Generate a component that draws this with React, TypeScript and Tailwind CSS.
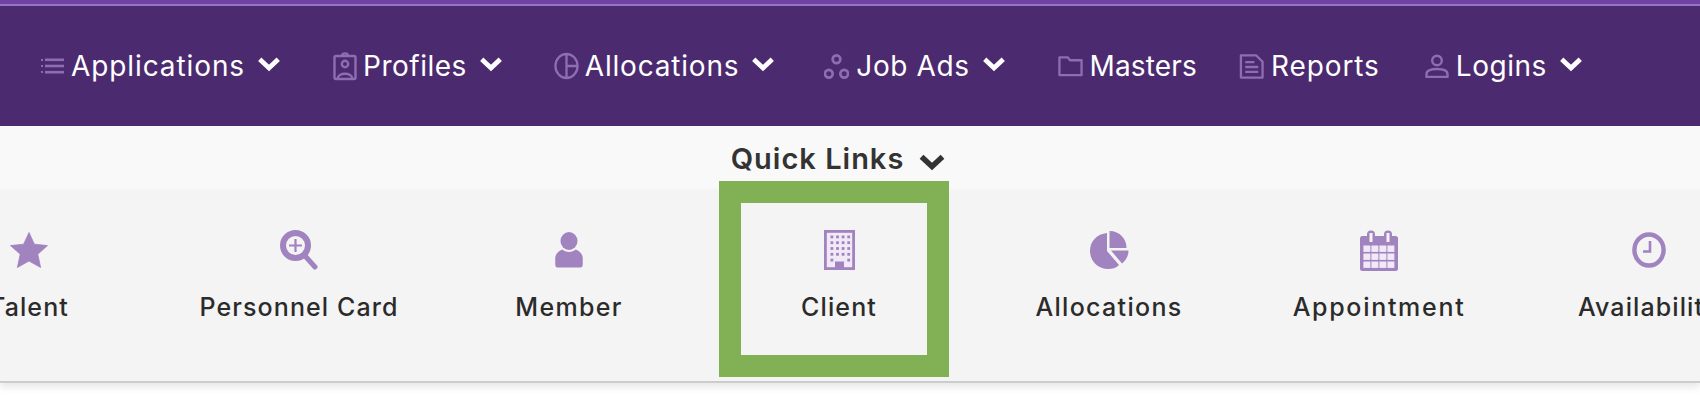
const NAV = "#8e6eb3";
const ACCENT = "#a083bf";

function Chevron({ className }: { className: string }) {
  return (
    <svg viewBox="0 0 22 15" className={className} fill="none" stroke="currentColor" strokeWidth="4.8" strokeLinecap="square">
      <path d="M3.5 4 L11 11 L18.5 4" />
    </svg>
  );
}

function ListIcon() {
  return (
    <svg width="24" height="16" viewBox="0 0 24 16" fill={NAV}>
      <rect x="0" y="1" width="2" height="2" />
      <rect x="0" y="7" width="2" height="2" />
      <rect x="0" y="13" width="2" height="2" />
      <rect x="4" y="0.5" width="19" height="2.6" />
      <rect x="4" y="6.7" width="19" height="2.6" />
      <rect x="4" y="12.9" width="19" height="2.6" />
    </svg>
  );
}

function BadgeIcon() {
  return (
    <svg width="24" height="29" viewBox="0 0 24 29" fill="none" stroke={NAV} strokeWidth="2.4">
      <rect x="1.5" y="4" width="21" height="23" rx="1.5" />
      <path d="M9 4 C9 0.5 15 0.5 15 4" />
      <circle cx="12" cy="12" r="3.2" />
      <path d="M4.5 27 C5 20 19 20 19.5 27" />
    </svg>
  );
}

function HalfPieIcon() {
  return (
    <svg width="26" height="28" viewBox="0 0 26 28" fill="none" stroke={NAV} strokeWidth="2.4">
      <ellipse cx="13" cy="14" rx="11.5" ry="12.5" />
      <path d="M13 1.5 V26.5 M13 14 H24.5" />
    </svg>
  );
}

function DotsIcon() {
  return (
    <svg width="26" height="27" viewBox="0 0 26 27" fill="none" stroke={NAV} strokeWidth="2.8">
      <circle cx="13" cy="6" r="4" />
      <circle cx="5" cy="21" r="4" />
      <circle cx="21" cy="21" r="4" />
    </svg>
  );
}

function FolderIcon() {
  return (
    <svg width="26" height="22" viewBox="0 0 26 22" fill="none" stroke={NAV} strokeWidth="2.4">
      <path d="M1.5 20.5 V2 H10 L12.5 5 H24.5 V20.5 Z" strokeLinejoin="round" />
    </svg>
  );
}

function ReportIcon() {
  return (
    <svg width="26" height="27" viewBox="0 0 26 27" fill="none" stroke={NAV} strokeWidth="2.4">
      <path d="M2 2 H18 L24.5 8.5 V25 H2 Z" strokeLinejoin="round" />
      <path d="M6.5 9 H16 M6.5 14 H20 M6.5 19 H20" />
    </svg>
  );
}

function PersonOutlineIcon() {
  return (
    <svg width="24" height="24" viewBox="0 0 24 24" fill="none" stroke={NAV} strokeWidth="2.4">
      <circle cx="12" cy="6.5" r="4.8" />
      <path d="M1.5 23 V20 C1.5 16 6 15 12 15 C18 15 22.5 16 22.5 20 V23 Z" strokeLinejoin="round" />
    </svg>
  );
}

function StarIcon() {
  return (
    <svg width="38" height="38" viewBox="0 0 38 38" fill={ACCENT}>
      <path d="M19 1.5 L24.4 13.2 L37.5 14.6 L27.8 23.2 L30.6 36.5 L19 30 L7.4 36.5 L10.2 23.2 L0.5 14.6 L13.6 13.2 Z" strokeLinejoin="round" stroke={ACCENT} strokeWidth="0.8" />
    </svg>
  );
}

function ZoomPlusIcon() {
  return (
    <svg width="38" height="40" viewBox="0 0 38 40" fill="none" stroke={ACCENT}>
      <circle cx="15.5" cy="15.5" r="12.5" strokeWidth="6" />
      <path d="M26 27 L35 37" strokeWidth="5" strokeLinecap="round" />
      <path d="M15.5 9 V22 M9 15.5 H22" strokeWidth="2.2" />
    </svg>
  );
}

function PersonIcon() {
  return (
    <svg width="30" height="36" viewBox="0 0 30 38" fill={ACCENT}>
      <ellipse cx="15" cy="9.5" rx="9" ry="9.5" />
      <path d="M3 37.5 C1 37.5 0.5 36 0.5 34 V28 C0.5 23 4 20 8 18.5 C11 22 19 22 22 18.5 C26 20 29.5 23 29.5 28 V34 C29.5 36 29 37.5 27 37.5 Z" />
    </svg>
  );
}

function BuildingIcon() {
  const cells = [];
  for (let r = 0; r < 5; r++) {
    for (let c = 0; c < 4; c++) {
      if (r === 4 && c > 0 && c < 3) continue;
      cells.push(<rect key={`${r}-${c}`} x={6.5 + c * 5.6} y={5.5 + r * 5.8} width="2.8" height="2.8" fill={ACCENT} />);
    }
  }
  return (
    <svg width="31" height="40" viewBox="0 0 31 40">
      <rect x="1.4" y="1.4" width="28.2" height="37.2" fill="#f1e9f7" stroke={ACCENT} strokeWidth="2.8" />
      {cells}
      <rect x="11" y="31.5" width="9" height="7" fill={ACCENT} />
    </svg>
  );
}

function PieIcon() {
  return (
    <svg width="40" height="40" viewBox="0 0 40 40" fill={ACCENT}>
      <path d="M18 3 V21 L30 35 C27 38 23 39 19 39 C9 39 1 31 1 21 C1 11 8 4 18 3 Z" />
      <path d="M20.5 1 C31 1 37.5 9 37.5 18 H20.5 Z" />
      <path d="M22 20.5 H39.5 C39.5 26 37 30 33 33.5 Z" />
    </svg>
  );
}

function CalendarIcon() {
  const cells = [];
  for (let r = 0; r < 3; r++) {
    for (let c = 0; c < 4; c++) {
      cells.push(<rect key={`${r}-${c}`} x={3.4 + c * 8} y={15.5 + r * 8} width="7" height="6.4" fill="#f1e9f7" />);
    }
  }
  return (
    <svg width="38" height="41" viewBox="0 0 38 41">
      <rect x="0" y="6" width="38" height="35" rx="2.5" fill={ACCENT} />
      <rect x="7" y="0.5" width="8" height="12" rx="4" fill={ACCENT} />
      <rect x="24" y="0.5" width="8" height="12" rx="4" fill={ACCENT} />
      <rect x="9.5" y="3" width="3" height="9" fill="#f4f4f4" />
      <rect x="26.5" y="3" width="3" height="9" fill="#f4f4f4" />
      {cells}
    </svg>
  );
}

function ClockIcon() {
  return (
    <svg width="34" height="36" viewBox="0 0 34 36" fill="none" stroke={ACCENT}>
      <ellipse cx="17" cy="18" rx="14.6" ry="15.5" strokeWidth="4.4" />
      <path d="M18 9 V19.5 H11" strokeWidth="2.6" />
    </svg>
  );
}

const navItems = [
  { label: "Applications", icon: <ListIcon />, caret: true, ml: "ml-[40px]", gap: "mr-[6px]", tracking: "tracking-[0.9px]" },
  { label: "Profiles", icon: <BadgeIcon />, caret: true, ml: "ml-[52px]", gap: "mr-[6px]", tracking: "tracking-[0.5px]" },
  { label: "Allocations", icon: <HalfPieIcon />, caret: true, ml: "ml-[52px]", gap: "mr-[6px]", tracking: "tracking-[0.8px]" },
  { label: "Job Ads", icon: <DotsIcon />, caret: true, ml: "ml-[50px]", gap: "mr-[7px]", tracking: "tracking-[0.6px]" },
  { label: "Masters", icon: <FolderIcon />, caret: false, ml: "ml-[53px]", gap: "mr-[7px]", tracking: "tracking-[0.15px]" },
  { label: "Reports", icon: <ReportIcon />, caret: false, ml: "ml-[42px]", gap: "mr-[7px]", tracking: "tracking-[0.9px]" },
  { label: "Logins", icon: <PersonOutlineIcon />, caret: true, ml: "ml-[45px]", gap: "mr-[6px]", tracking: "tracking-[0.55px]" },
];

const quickLinks = [
  { label: "Talent", icon: <StarIcon />, tracking: "tracking-[1.1px]" },
  { label: "Personnel Card", icon: <ZoomPlusIcon />, tracking: "tracking-[1.1px]" },
  { label: "Member", icon: <PersonIcon />, tracking: "tracking-[1.3px]" },
  { label: "Client", icon: <BuildingIcon />, tracking: "tracking-[1.1px]" },
  { label: "Allocations", icon: <PieIcon />, tracking: "tracking-[1.3px]" },
  { label: "Appointment", icon: <CalendarIcon />, tracking: "tracking-[1.7px]" },
  { label: "Availability", icon: <ClockIcon />, tracking: "tracking-[1.1px]" },
];

export default function App() {
  return (
    <div className="relative h-[402px] w-full overflow-hidden bg-white font-['Inter',sans-serif]">
      {/* top nav */}
      <div className="h-[4px] bg-[#6f43a3]" />
      <div className="h-[2px] bg-[#9a73c2]" />
      <nav className="flex h-[120px] items-center bg-[#4c2a6f] text-white">
        {navItems.map((item) => (
          <div key={item.label} className={`flex items-center ${item.ml}`}>
            <span className={`flex w-[25px] justify-center ${item.gap}`}>{item.icon}</span>
            <span className={`text-[28px] leading-none font-normal ${item.tracking}`}>{item.label}</span>
            {item.caret && <Chevron className="ml-[13px] h-[15px] w-[22px] -translate-y-[2px]" />}
          </div>
        ))}
      </nav>

      {/* quick links header */}
      <div className="flex h-[64px] items-start justify-center bg-[#f9f9f9] pt-[16px] pr-[24px] text-[#333333]">
        <span className="text-[29px] leading-[34px] font-semibold tracking-[1px]">Quick Links</span>
        <Chevron className="mt-[12px] ml-[15px] h-[17px] w-[26px]" />
      </div>

      {/* quick links strip */}
      <div className="h-[193px] overflow-hidden border-b-2 border-[#cccccc] bg-[#f4f4f4] shadow-[0_4px_8px_rgba(0,0,0,0.1)]">
        <div className="ml-[-106px] flex w-[1890px] pt-[38px]">
          {quickLinks.map((link) => (
            <div key={link.label} className="flex w-[270px] flex-col items-center">
              <div className="flex h-[44px] items-center justify-center">{link.icon}</div>
              <span className={`mt-[20px] text-[25px] leading-[30px] font-medium whitespace-nowrap text-[#2b2b2b] ${link.tracking}`}>{link.label}</span>
            </div>
          ))}
        </div>
      </div>

      {/* green highlight over the Client tile */}
      <div className="absolute top-[181px] left-[719px] h-[196px] w-[230px] border-[22px] border-[#81b055]" />
    </div>
  );
}
